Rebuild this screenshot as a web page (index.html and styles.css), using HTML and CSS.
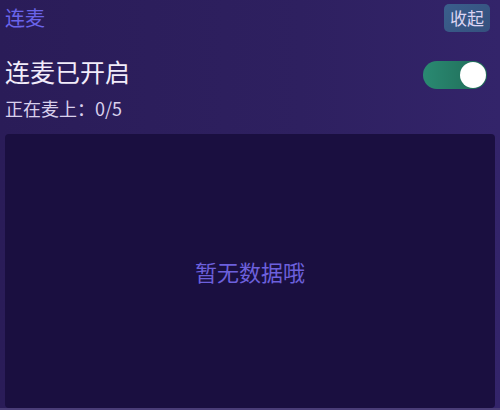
FILE: index.html
```html
<!DOCTYPE html>
<html lang="zh">
<head>
<meta charset="utf-8">
<link rel="stylesheet" href="styles.css">
</head>
<body>
<div class="panel">
  <div class="head">
    <span class="title">连麦</span>
    <button class="collapse">收起</button>
  </div>
  <div class="status">
    <span class="status-text">连麦已开启</span>
    <span class="switch"><span class="knob"></span></span>
  </div>
  <div class="count">正在麦上：0/5</div>
  <div class="list">
    <span class="empty">暂无数据哦</span>
  </div>
</div>
</body>
</html>
```
FILE: styles.css
```css
html, body {
  margin: 0;
  padding: 0;
}
body {
  width: 500px;
  height: 410px;
  overflow: hidden;
  background: #4a3d78;
  font-family: "Noto Sans CJK SC", "Noto Sans", sans-serif;
}
.panel {
  height: 408px;
  background: linear-gradient(90deg, #2a1c58 0%, #2e2060 60%, #33246a 100%);
  display: flex;
  flex-direction: column;
  padding: 0 5px 0 5px;
  box-sizing: border-box;
}
.head {
  display: flex;
  justify-content: space-between;
  align-items: flex-start;
  height: 40px;
  padding-top: 4px;
  box-sizing: border-box;
}
.title {
  color: #6a64ea;
  font-size: 20px;
  line-height: 28px;
}
.collapse {
  border: none;
  margin: 0 5px 0 0;
  padding: 0 6px;
  height: 28px;
  border-radius: 5px;
  background: linear-gradient(135deg, #3a5f8c, #35507e);
  color: #dcd4f2;
  font-family: inherit;
  font-size: 17px;
  line-height: 28px;
}
.status {
  display: flex;
  justify-content: space-between;
  align-items: flex-start;
  margin-top: 13px;
  height: 36px;
}
.status-text {
  color: #f2ecfa;
  font-size: 25px;
  line-height: 36px;
}
.switch {
  width: 64px;
  height: 28px;
  border-radius: 14px;
  background: linear-gradient(90deg, #2a8a72, #1f6a56);
  display: flex;
  align-items: center;
  justify-content: flex-end;
  padding: 0 1px;
  box-sizing: border-box;
  margin: 8px 8px 0 0;
}
.knob {
  width: 26px;
  height: 26px;
  border-radius: 50%;
  background: #ffffff;
}
.count {
  color: #d9d0ec;
  font-size: 18px;
  line-height: 24px;
  margin-top: 7px;
}
.list {
  margin-top: 14px;
  flex: 1;
  background: #1a0f40;
  border-radius: 4px;
  display: flex;
  align-items: center;
  justify-content: center;
}
.empty {
  color: #6c60dc;
  font-size: 22px;
}
```
